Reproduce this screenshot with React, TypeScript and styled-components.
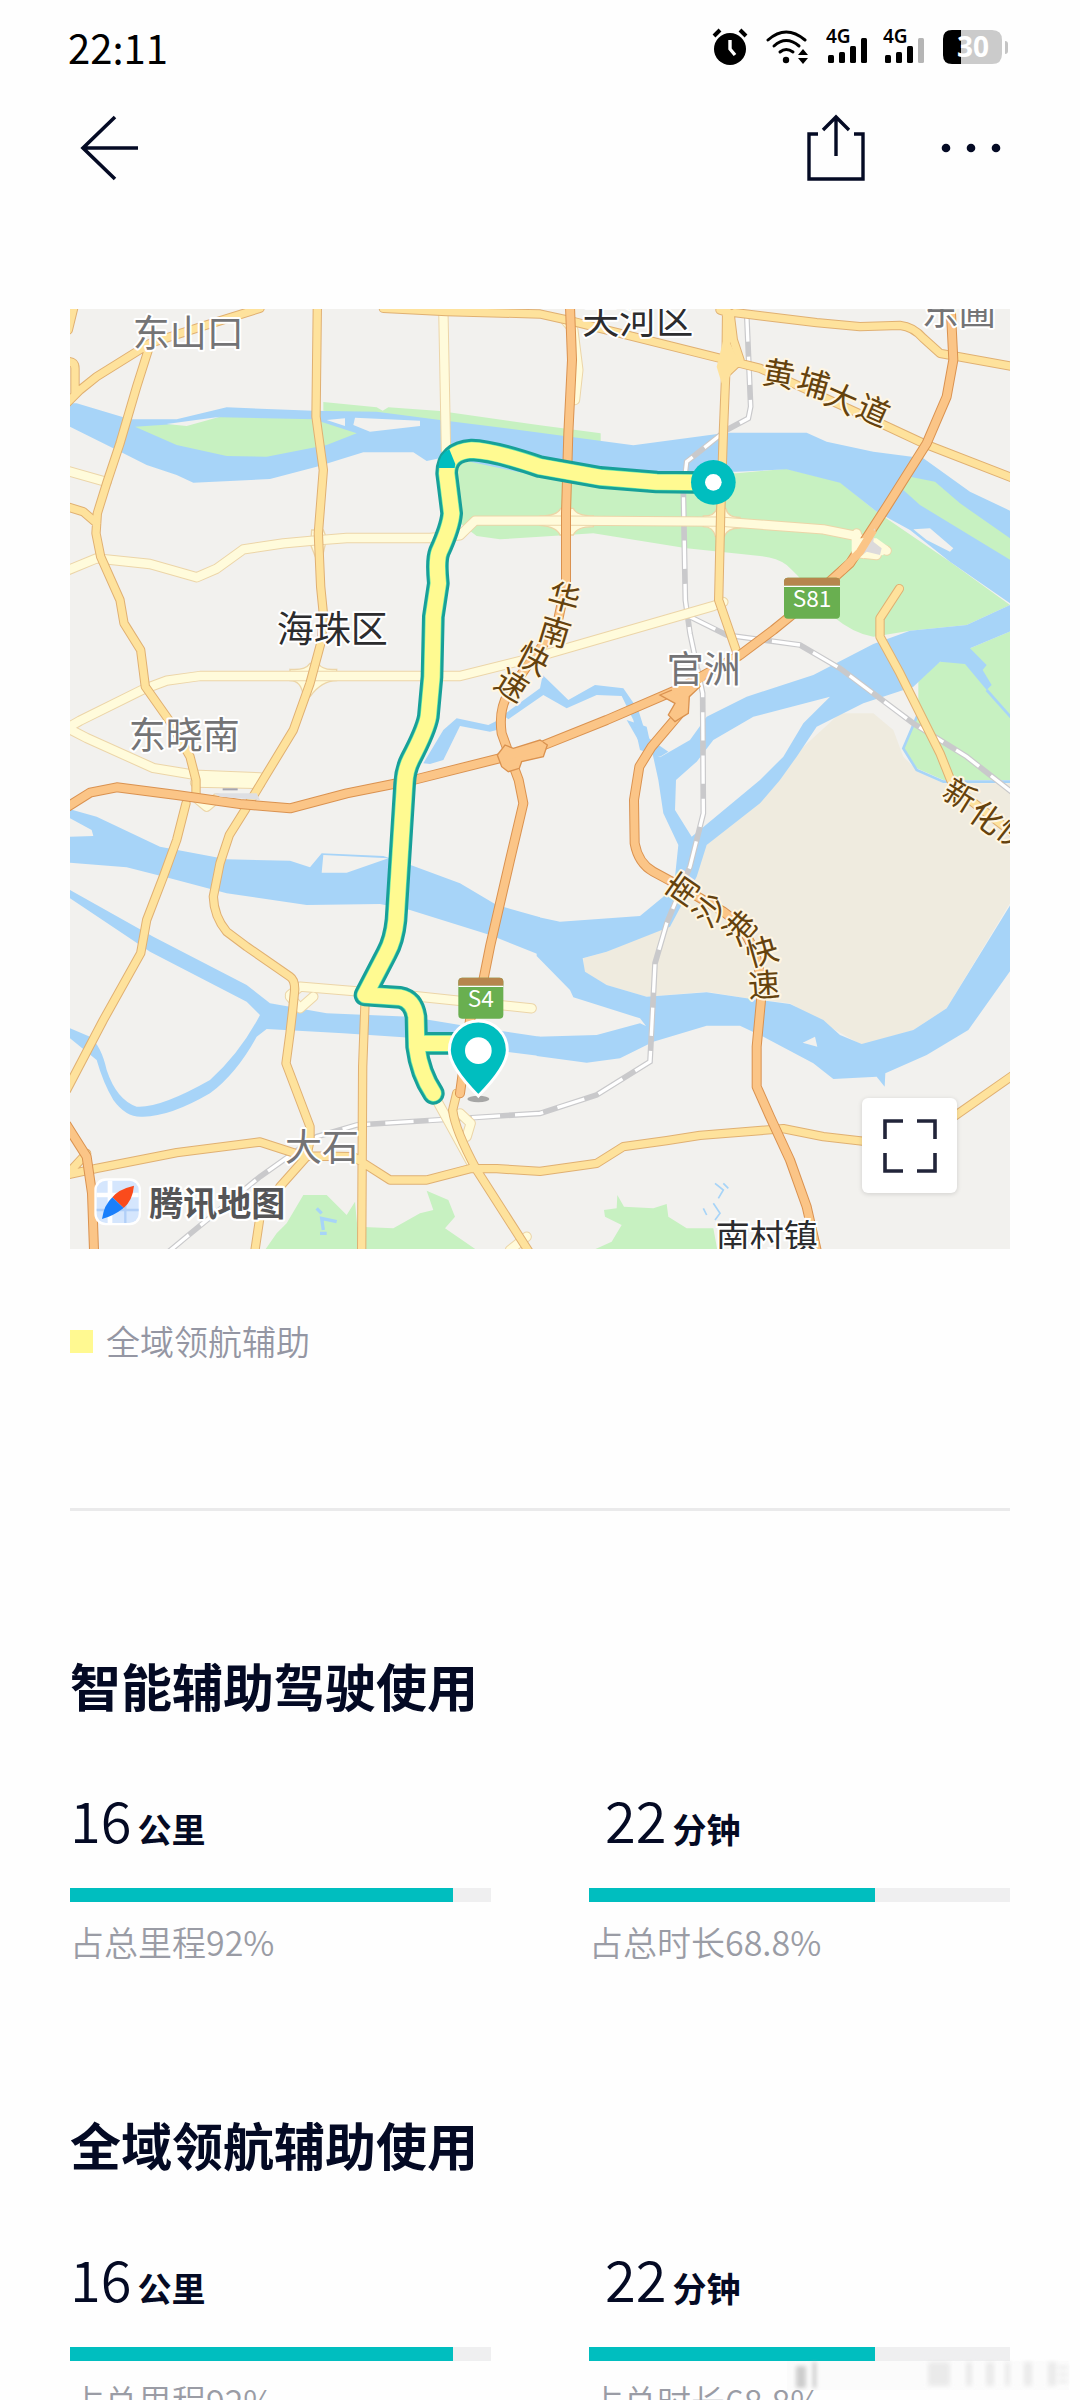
import React from "react";
import styled, { createGlobalStyle } from "styled-components";

const GlobalStyle = createGlobalStyle`
  * { box-sizing: border-box; }
  body {
    margin: 0;
    background: #fefefe;
    color: #040a24;
    font-family: "Noto Sans CJK SC", "Noto Sans", sans-serif;
  }
`;

const Screen = styled.div`
  position: relative;
  height: 100vh;
  overflow-y: auto;
  scrollbar-width: none;
`;

const StatusBar = styled.div`
  display: flex;
  align-items: center;
  justify-content: space-between;
  height: 94px;
  padding: 0 72px 0 68px;
  color: #000;
`;

const Clock = styled.time`
  font-size: 40px;
  line-height: 48px;
  font-weight: 400;
`;

const StatusIcons = styled.div`
  display: flex;
  align-items: center;
  gap: 18px;
`;

const Signals = styled.div`
  display: flex;
  gap: 15px;
`;

const NavBar = styled.header`
  display: flex;
  align-items: center;
  justify-content: space-between;
  height: 108px;
  padding: 0 73px;
`;

const NavActions = styled.div`
  display: flex;
  gap: 63px;
`;

const IconButton = styled.button`
  display: flex;
  align-items: center;
  justify-content: center;
  width: 72px;
  height: 72px;
  padding: 0;
  border: 0;
  background: none;
  color: #040a24;
`;

const Content = styled.main`
  padding: 107px 70px 0;
`;

const MapCard = styled.div`
  position: relative;
  aspect-ratio: 1;
  overflow: hidden;

  > svg {
    display: block;
    width: 100%;
    height: 100%;
  }
`;

const ExpandButton = styled(IconButton)`
  position: absolute;
  right: 53px;
  bottom: 56px;
  width: 95px;
  height: 95px;
  border-radius: 6px;
  background: #fff;
  box-shadow: 0 1px 5px rgba(0, 0, 0, 0.14);
  color: #22253a;
`;

const Legend = styled.div`
  display: flex;
  align-items: center;
  gap: 13px;
  margin-top: 68px;
  font-size: 34px;
  line-height: 48px;
  font-weight: 350;
  color: #9496a3;
`;

const Swatch = styled.span`
  width: 23px;
  height: 23px;
  background: #fff991;
`;

const Divider = styled.hr`
  height: 3px;
  margin: 143px 0 0;
  border: 0;
  background: #eaeaeb;
`;

const Section = styled.section`
  margin-bottom: 142px;

  ${Divider} + & {
    margin-top: 138px;
  }
`;

const SectionTitle = styled.h2`
  margin: 0 0 66px;
  font-size: 51px;
  line-height: 72px;
  font-weight: 700;
`;

const StatGrid = styled.div`
  display: grid;
  grid-template-columns: 1fr 1fr;
  gap: 98px;
`;

const Figure = styled.div<{ $inset?: boolean }>`
  display: flex;
  align-items: baseline;
  gap: 6px;
  padding-left: ${(p) => (p.$inset ? 16 : 0)}px;
`;

const Amount = styled.span`
  font-size: 56px;
  line-height: 64px;
  font-weight: 350;
`;

const Unit = styled.span`
  font-size: 34px;
  line-height: 48px;
  font-weight: 700;
`;

const Track = styled.div`
  height: 14px;
  margin-top: 35px;
  background: #efeff0;
`;

const Fill = styled.div`
  height: 100%;
  background: #00bebf;
`;

const Caption = styled.p`
  margin: 16px 0 0;
  font-size: 34px;
  line-height: 48px;
  font-weight: 350;
  color: #9a9ca5;
`;

const Watermark = styled.div`
  position: absolute;
  right: 10px;
  bottom: 8px;
  opacity: 0.7;

  > svg {
    display: block;
  }
`;

/* ---------- status icons ---------- */

const AlarmIcon = () => (
  <svg width="36" height="38" viewBox="0 0 36 38" aria-label="闹钟">
    <circle cx="18" cy="21" r="16" />
    <path d="M2 8l6-6M34 8l-6-6" stroke="#000" strokeWidth="4" />
    <path d="M18 12v9l5 6" stroke="#fff" strokeWidth="3.4" fill="none" />
  </svg>
);

const WifiIcon = () => (
  <svg width="42" height="34" viewBox="0 0 42 34" aria-label="WLAN">
    <g fill="none" stroke="#000" strokeWidth="3" strokeLinecap="round">
      <path d="M2 10Q20-6 39 10" />
      <path d="M8 16Q20 5 33 16" />
      <path d="M14 22Q20 17 27 22" />
    </g>
    <circle cx="20" cy="30" r="3.2" />
    <path d="M32 25l5-6 5 6zM32 28l5 6 5-6z" />
  </svg>
);

const SignalIcon = ({ bars }: { bars: number }) => (
  <svg width="42" height="50" viewBox="0 0 42 50" aria-label="4G">
    <text x="0" y="21" fontSize="19" fontWeight="600" fontFamily="Noto Sans, sans-serif">
      4G
    </text>
    {[8, 11, 17, 25].map((h, i) => (
      <rect key={h} x={2 + i * 11} y={41 - h} width="6" height={h} rx="1.5" fill={i < bars ? "#000" : "#b5b5b5"} />
    ))}
  </svg>
);

const BatteryIcon = () => (
  <svg width="65" height="50" viewBox="0 -8 65 50" aria-label="电量 30%">
    <path d="M10 0h39q10 0 10 10v14q0 10-10 10H17V0z" fill="#cbcbcb" />
    <path d="M18 0H9Q0 0 0 9v16q0 9 9 9h9z" />
    <path d="M62 11q3 0 3 3v7q0 3-3 3z" fill="#c4c4c4" />
    <text x="30" y="27" fontSize="28" fontWeight="700" fill="#fff" textAnchor="middle" fontFamily="Noto Sans, sans-serif">
      30
    </text>
  </svg>
);

/* ---------- map ---------- */

type RoadKind = "pale" | "yellow" | "orange";

const roadStyle: Record<RoadKind, { edge: string; fill: string; width: number }> = {
  pale: { edge: "#ecd5a8", fill: "#fffbdb", width: 25 },
  yellow: { edge: "#e0b072", fill: "#fee29c", width: 22 },
  orange: { edge: "#da9250", fill: "#fbc587", width: 24 },
};

const roads: Record<RoadKind, string[]> = {
  pale: [
    "M20 512L140 546",
    "M20 812L110 775L270 792L410 832L470 806L550 748L670 730L760 722L860 714H1110L1200 706L1245 662H1440L1520 662L1980 665L2290 688L2380 706L2480 752",
    "M1150 30L1158 450",
    "M20 1285L60 1262L250 1168L320 1142L420 1128H1200L1440 1068L1960 918L1990 906",
    "M30 1288L80 1314L280 1404L400 1424L600 1432",
    "M405 1448L600 1452M410 1495L440 1520L470 1495",
    "M690 2085L720 2060L900 2075L1060 2088L1415 2125",
    "M1130 2400L1240 2600M1200 2440L1232 2470L1220 2510",
    "M1515 60L1540 90L1555 210L1545 300",
    "M690 2090L720 2125L760 2090",
    "M1350 2850L1400 2810",
    "M2390 700L2400 760L2450 765",
  ],
  yellow: [
    "M42 20L25 90",
    "M25 185Q45 185 45 205V280",
    "M20 310L60 270L110 230L270 130L430 78L600 25",
    "M268 140L230 260L180 430L140 550L112 640L108 700L122 770L180 900L192 970L242 1050L256 1160L330 1265L390 1370L408 1440V1490",
    "M20 620L70 635L110 670",
    "M772 20L768 350L790 510L775 700L782 860L790 940L785 1020L750 1150L700 1290L615 1430L555 1530L508 1605L480 1690L460 1790Q462 1850 500 1895L560 1940L690 2030Q705 2040 704 2070L698 2130L690 2200L678 2290L750 2480V2520L740 2570L660 2660L600 2750L585 2850",
    "M378 1510L350 1620L310 1730L260 1860L242 1960L130 2160L20 2370",
    "M915 2110L908 2300L905 2850",
    "M20 2625L110 2605L350 2558L600 2526L730 2568L880 2570L990 2640H1100L1230 2606H1310L1440 2614L1610 2590L1690 2540L1820 2522L1920 2506L2170 2486L2290 2510L2420 2525",
    "M2660 2465L2860 2325",
    "M1190 2380L1178 2430Q1185 2490 1250 2610L1410 2860",
    "M970 25L1160 35L1440 42L1530 62L1640 90L1980 175L2100 205L2440 360L2590 430L2860 535",
    "M2000 20L1998 200L1990 400L1982 640L1976 900L2035 1070",
    "M1980 30L2010 40L2020 120L2040 180L1998 220",
    "M2025 38L2270 68L2400 80L2520 76Q2560 80 2590 115L2640 160L2860 200",
    "M2518 866L2460 955V1010L2520 1120L2640 1360L2672 1440L2730 1500L2860 1600",
    "M80 2560L25 2620",
  ],
  orange: [
    "M1530 20L1536 180L1525 400L1518 640V850L1490 980L1400 1100L1345 1180Q1315 1230 1325 1300L1350 1370L1376 1440L1390 1510L1350 1680L1290 1940L1270 2040L1230 2160L1200 2380",
    "M20 1522L90 1478L170 1462L350 1485L540 1512L690 1525L860 1480L1060 1440L1330 1372L1440 1340L1640 1260L1860 1165L2040 1065L2140 990L2220 925L2370 790L2480 620L2600 430L2660 290L2680 180L2672 20",
    "M1875 1170L1860 1240L1775 1340L1738 1400L1722 1500L1724 1630Q1735 1690 1780 1715L1830 1742L1990 1835Q2100 1910 2105 2080L2090 2240V2360L2130 2450L2190 2580L2240 2720L2272 2860",
    "M20 2475L80 2570L96 2680L102 2850",
  ],
};

const rails = [
  "M2060 40L2072 320L2065 355L2000 390L1880 485L1870 570L1876 900L1890 1000L1928 1180L1930 1540L1890 1700L1820 1870L1785 1990L1770 2285L1610 2385L1440 2440L1130 2460L890 2475L770 2510L600 2630L380 2810L320 2860",
  "M1890 950L2000 1005L2220 1035L2340 1105L2560 1270L2720 1370L2860 1480",
];

const route =
  "M1960 548L1790 546L1620 532L1440 500Q1300 452 1235 450Q1160 455 1160 520L1175 640Q1172 680 1138 755Q1128 780 1135 850L1120 950L1116 1130L1105 1250Q1098 1290 1052 1378Q1036 1410 1034 1450L1008 1860Q1002 1920 980 1960L915 2085L1020 2092Q1060 2100 1068 2150L1070 2240Q1080 2320 1120 2380";
const routeBranch = "M1080 2230H1190";

const placeFont = "'Noto Sans CJK SC', sans-serif";

const Place = ({ x, y, dark, children }: { x: number; y: number; dark?: boolean; children: string }) => (
  <text
    x={x}
    y={y}
    fontSize="111"
    fill={dark ? "#2c2c2e" : "#747476"}
    stroke="#fff"
    strokeWidth="12"
    strokeLinejoin="round"
    paintOrder="stroke"
    fontFamily={placeFont}
  >
    {children}
  </text>
);

/** Road names follow the bend of the road: [glyph, centre x, centre y, angle]. */
const roadNames: [string, number, number, number][] = [
  ["黄", 2156, 222, 10],
  ["埔", 2260, 250, 16],
  ["大", 2344, 295, 24],
  ["道", 2440, 332, 24],
  ["华", 1512, 893, 15],
  ["南", 1484, 995, 17],
  ["快", 1420, 1076, 28],
  ["速", 1355, 1155, 32],
  ["新", 2700, 1485, 32],
  ["化", 2780, 1552, 35],
  ["快", 2862, 1605, 38],
  ["南", 1868, 1768, -55],
  ["沙", 1950, 1830, -52],
  ["港", 2040, 1885, -48],
  ["快", 2106, 1955, -16],
  ["速", 2112, 2055, -4],
];

const RoadShield = ({ x, y, width, name }: { x: number; y: number; width: number; name: string }) => (
  <g>
    <rect x={x} y={y} width={width} height="123" rx="12" fill="#69af50" />
    <path d={`M${x} ${y + 24}v-12q0-12 12-12h${width - 24}q12 0 12 12v12z`} fill="#b6864d" />
    <path d={`M${x} ${y + 26}h${width}`} stroke="#fff" strokeWidth="4" />
    <text x={x + width / 2} y={y + 88} fontSize="68" fill="#fff" textAnchor="middle" fontFamily={placeFont}>
      {name}
    </text>
  </g>
);

const RouteMap = () => (
  <svg viewBox="30 27 2820 2820" role="img" aria-label="行程路线地图">
    <rect x="30" y="27" width="2820" height="2820" fill="#f2f1ee" />

    {/* university island */}
    <path
      d="M1570 1975L1640 1955L1820 1880L1940 1635L2160 1440L2220 1350L2340 1240L2440 1240L2500 1290L2530 1370L2570 1410L2650 1450H2850V1810L2660 2125L2560 2190L2405 2235L2290 2170L2190 2110L2060 2095L1940 2075L1760 2090L1640 2055L1570 2015z"
      fill="#efebdf"
    />

    {/* parks */}
    <g fill="#c7f1c1">
      <path d="M790 306L950 322L968 332L985 322L1140 333L1440 376L1622 400V428L1440 402L1140 362L790 332z" />
      <path d="M1190 470L1440 520H2030L2180 506L2340 546L2450 635L2670 785L2850 915L2720 975L2550 992L2440 1010Q2380 1000 2320 950Q2240 850 2180 795Q2150 772 2100 768L1880 745L1600 700L1440 710L1320 718L1250 708L1200 670z" />
      <path d="M2730 1045L2860 990V1440H2650L2570 1405L2530 1345L2575 1240V1130L2640 1085z" />
      <path d="M615 2850L650 2800L680 2770L730 2685H800L860 2745L885 2705L892 2780L1000 2785L1080 2740L1120 2730L1100 2672L1165 2700L1185 2750L1155 2785L1250 2850z" />
      <path d="M1600 2850L1655 2825L1685 2775L1635 2750L1632 2730L1670 2725L1672 2685L1692 2720L1780 2725L1820 2712L1825 2750L1880 2785L1960 2785L1972 2850z" />
    </g>

    {/* rivers */}
    <g fill="#a7d4f8">
      <path d="M30 310H50L210 358H350L500 322L760 332L950 335L1140 360L1440 398L1720 436L2000 398H2240L2300 425L2440 455L2590 475L2730 575L2850 632V910L2670 785L2550 690L2450 635L2340 548L2180 508L2030 515L1440 530L1160 470L1100 483L1060 457H910L770 500L630 537L400 548L350 525L260 495L190 460L30 380z" />
      <path d="M2860 910L2720 975L2550 992L2440 1032L2260 1125L2060 1190L1940 1250L1890 1320L1800 1372L1740 1330L1700 1260L1760 1280L1795 1440L1810 1540L1855 1635L1845 1730L1810 1790L1740 1848L1500 1865L1430 1850V1968L1530 2070L1540 2092L1740 2155L1758 2178L1740 2170L1610 2205L1430 2210V2268L1580 2288L1680 2275L1780 2225L1940 2177H2040L2110 2210L2260 2290L2320 2337L2450 2330L2474 2360L2476 2320L2600 2265L2725 2190L2860 2000V1800L2660 2125L2560 2190L2405 2232L2340 2205L2290 2160L2190 2112L2060 2095L1940 2077L1760 2090L1640 2055L1575 2015L1568 1975L1640 1955L1830 1880L1910 1730L1940 1635L2100 1510L2160 1440L2210 1370L2270 1280L2410 1210L2560 1160L2640 1085L2715 1092L2780 1170L2795 1155L2768 1110L2780 1095L2730 1045L2860 990z" />
      <path d="M30 1528L110 1550L300 1640L500 1678L690 1682L750 1702L785 1660L970 1668L1060 1698L1200 1750L1310 1815L1440 1852V1965L1290 1905L1050 1830L960 1812L740 1815L500 1780L330 1735L200 1702L30 1688z" />
      <path d="M30 1770L280 1910L560 2055L630 2110L800 2140L1050 2150L1200 2175L1440 2210V2268L1300 2250L1030 2212L850 2200L620 2187L590 2210Q530 2320 450 2380Q330 2450 250 2450Q200 2455 160 2400Q130 2350 110 2280L30 2215V2185L90 2210Q125 2240 140 2310Q170 2400 230 2420Q300 2425 450 2340Q540 2260 600 2145L560 2105L270 1955L30 1795z" />
      <path d="M1090 1390L1150 1290L1190 1255L1285 1275L1320 1258L1310 1290L1290 1295L1200 1278L1150 1380L1110 1392z" />
      <path d="M1330 1245L1440 1165L1448 1125L1525 1200L1605 1155L1690 1165L1735 1230L1760 1310L1825 1355L1800 1370L1740 1350L1720 1260L1685 1188L1610 1185L1520 1225L1450 1185L1345 1258z" />
    </g>
    <path d="M2575 1240L2530 1345L2570 1410L2650 1445H2860M2780 1170L2860 1260" stroke="#a7d4f8" strokeWidth="8" fill="none" />
    <g fill="#c7f1c1">
      <path d="M225 380L380 370L480 352L760 358L890 400L800 435L620 470L500 468L350 435z" />
      <path d="M2550 530L2625 545L2700 610L2860 722V785L2580 615L2530 570z" />
    </g>
    {/* islets and sand bars */}
    <g fill="#f2f1ee">
      <path d="M885 353L1080 362V378L930 395L880 375zM800 360L855 355V378zM320 372L480 350L380 378z" />
      <path d="M30 1555L95 1590L100 1608L30 1610zM790 1665L985 1675L860 1718H785z" />
      <path d="M1848 1440L1845 1530L1895 1610L2100 1440L2170 1370L2230 1270L2310 1190L2080 1250L1960 1320L1910 1385z" />
      <path d="M2228 2228L2265 2210L2272 2240zM2560 688L2610 685L2680 745L2670 755L2600 720z" />
    </g>
    <path d="M770 2725L785 2740M780 2800H800M790 2790L785 2755L830 2765" stroke="#a7d4f8" strokeWidth="10" fill="none" />
    <path d="M1965 2650L1990 2670L1975 2695M1990 2650L2005 2665M1960 2710L1980 2740L1965 2760M1930 2725L1940 2745" stroke="#a7d4f8" strokeWidth="5" fill="none" />

    {/* railways */}
    {rails.map((d) => (
      <g key={d} fill="none">
        <path d={d} stroke="#c9c9cb" strokeWidth="17" />
        <path d={d} stroke="#fff" strokeWidth="10" strokeDasharray="85 45" />
      </g>
    ))}

    {/* interchange aprons */}
    <g fill="#fffbdb" stroke="#ecd5a8" strokeWidth="4">
      <path d="M755 690H790L800 715L785 780H770L752 735z" />
      <path d="M690 1108Q735 1112 750 1090H775Q785 1112 830 1108V1142Q785 1142 750 1190H730Q725 1142 690 1142z" />
      <path d="M1440 648Q1490 648 1502 625H1540Q1550 648 1600 648V680Q1550 680 1540 705H1500Q1490 680 1440 676z" />
      <path d="M1930 648Q1965 648 1970 625H1998Q2002 652 2040 652V684Q2002 684 1992 710H1966Q1960 680 1930 680z" />
    </g>

    {/* roads */}
    {(Object.keys(roads) as RoadKind[]).map((kind) => {
      const s = roadStyle[kind];
      return (
        <g key={kind} fill="none" strokeLinejoin="round" strokeLinecap="round">
          <path d={roads[kind].join("")} stroke={s.edge} strokeWidth={s.width + 6} />
          <path d={roads[kind].join("")} stroke={s.fill} strokeWidth={s.width} />
        </g>
      );
    })}
    <path d="M2375 715L2375 760L2410 775L2470 765L2485 740L2450 715z" fill="#fffbdb" />
    <path d="M2400 770L2430 700L2445 685L2440 725L2465 745L2460 765L2420 755z" fill="#dcdadb" />
    <path d="M2345 812L2400 755L2440 690" stroke="#fbc587" strokeWidth="24" fill="none" />
    <path d="M460 1480H590L600 1500L480 1490z" fill="#dedfe3" />
    <path d="M488 1468h45" stroke="#a5a5b0" strokeWidth="6" />
    <g fill="#fbc587" stroke="#da9250" strokeWidth="4">
      <path d="M1312 1365L1335 1335L1360 1345L1440 1320L1462 1335L1450 1370L1385 1385L1378 1405L1345 1415L1325 1400z" />
      <path d="M1800 1185L1860 1160L1910 1130L1920 1160L1888 1190L1885 1240L1845 1265L1825 1245L1845 1210z" />
    </g>
    <path d="M1330 1370L1450 1336M1840 1178L1930 1130" stroke="#fbc587" strokeWidth="24" />
    <path d="M1970 200L1990 120H2005L2040 190L2015 215L2000 250H1985z" fill="#fee29c" />

    {/* driven route */}
    <g fill="none" strokeLinejoin="round" strokeLinecap="round">
      <path d={route + routeBranch} stroke="#17a099" strokeWidth="68" />
      <path d={route + routeBranch} stroke="#62e6a8" strokeWidth="50" />
      <path d={route + routeBranch} stroke="#fffa91" strokeWidth="46" />
    </g>
    <path d="M1168 448L1186 492L1184 504H1136Q1136 462 1168 448z" fill="#00bebf" />
    <circle cx="1960" cy="547" r="67" fill="#00bebf" />
    <circle cx="1960" cy="547" r="25" fill="#fff" />

    {/* place names */}
    <Place x={218} y={142}>东山口</Place>
    <Place x={1567} y={101} dark>天河区</Place>
    <Place x={2585} y={75}>东圃</Place>
    <Place x={650} y={1030} dark>海珠区</Place>
    <Place x={206} y={1348}>东晓南</Place>
    <Place x={1820} y={1148}>官洲</Place>
    <Place x={675} y={2584}>大石</Place>
    <text x="1967" y="2846" fontSize="102" fill="#2c2c2e" stroke="#fff" strokeWidth="12" paintOrder="stroke" fontFamily={placeFont}>
      南村镇
    </text>
    {roadNames.map(([glyph, x, y, angle]) => (
      <text
        key={`${x}-${y}`}
        transform={`translate(${x} ${y}) rotate(${angle})`}
        y="35"
        fontSize="96"
        textAnchor="middle"
        fill="#65420d"
        stroke="#fff6e2"
        strokeWidth="12"
        strokeLinejoin="round"
        paintOrder="stroke"
        fontFamily={placeFont}
      >
        {glyph}
      </text>
    ))}

    <RoadShield x={2172} y={833} width={168} name="S81" />
    <RoadShield x={1195} y={2033} width={135} name="S4" />

    {/* destination pin */}
    <ellipse cx="1255" cy="2397" rx="33" ry="10" fill="#8c8c8c" opacity=".75" />
    <path
      d="M1255 2388Q1168 2300 1168 2250A87 87 0 0 1 1342 2250Q1342 2300 1255 2388z"
      fill="#00bebf"
      stroke="#fff"
      strokeWidth="9"
    />
    <circle cx="1255" cy="2252" r="40" fill="#fff" />

    {/* map provider */}
    <rect x="103" y="2635" width="140" height="141" rx="34" fill="#fff" />
    <rect x="110" y="2642" width="126" height="127" rx="28" fill="#d5e6fd" />
    <path d="M150 2642V2769M110 2685H236" stroke="#fff" strokeWidth="14" />
    <path d="M196 2680V2769M110 2730H236" stroke="#b1cff8" strokeWidth="7" />
    <path d="M222 2657Q175 2668 157 2692L191 2724Q218 2700 222 2657z" fill="#fa4b1c" />
    <path d="M126 2757Q132 2715 157 2692L191 2724Q160 2748 126 2757z" fill="#1a7ffb" />
    <text x="268" y="2748" fontSize="102" fontWeight="700" fill="#555557" stroke="#fff" strokeWidth="14" strokeLinejoin="round" paintOrder="stroke" fontFamily={placeFont}>
      腾讯地图
    </text>
  </svg>
);

/* ---------- usage statistics ---------- */

interface Stat {
  amount: number;
  unit: string;
  caption: string;
  fill: number;
}

const stats: Stat[] = [
  { amount: 16, unit: "公里", caption: "占总里程92%", fill: 91 },
  { amount: 22, unit: "分钟", caption: "占总时长68.8%", fill: 68 },
];

const UsageSection = ({ title }: { title: string }) => (
  <Section>
    <SectionTitle>{title}</SectionTitle>
    <StatGrid>
      {stats.map((s, i) => (
        <div key={s.unit}>
          <Figure $inset={i > 0}>
            <Amount>{s.amount}</Amount>
            <Unit>{s.unit}</Unit>
          </Figure>
          <Track role="progressbar" aria-label={s.caption} aria-valuenow={s.fill}>
            <Fill style={{ width: `${s.fill}%` }} />
          </Track>
          <Caption>{s.caption}</Caption>
        </div>
      ))}
    </StatGrid>
  </Section>
);

export default function App() {
  return (
    <Screen>
      <GlobalStyle />
      <StatusBar>
        <Clock>22:11</Clock>
        <StatusIcons>
          <AlarmIcon />
          <WifiIcon />
          <Signals>
            <SignalIcon bars={4} />
            <SignalIcon bars={3} />
          </Signals>
          <BatteryIcon />
        </StatusIcons>
      </StatusBar>
      <NavBar>
        <IconButton type="button" aria-label="返回">
          <svg width="60" height="66" viewBox="0 0 60 66" fill="none" stroke="currentColor" strokeWidth="3.6">
            <path d="M36 2L4 33l32 31M4 33h55" />
          </svg>
        </IconButton>
        <NavActions>
          <IconButton type="button" aria-label="分享">
            <svg width="60" height="68" viewBox="0 0 60 68" fill="none" stroke="currentColor" strokeWidth="3.4">
              <path d="M12 20H3v45h54V20h-9" />
              <path d="M30 42V3M17 16L30 3l13 13" />
            </svg>
          </IconButton>
          <IconButton type="button" aria-label="更多">
            <svg width="60" height="12" viewBox="0 0 60 12" fill="currentColor">
              <circle cx="5" cy="6" r="4.3" />
              <circle cx="30" cy="6" r="4.3" />
              <circle cx="55" cy="6" r="4.3" />
            </svg>
          </IconButton>
        </NavActions>
      </NavBar>
      <Content>
        <MapCard>
          <RouteMap />
          <ExpandButton type="button" aria-label="全屏查看地图">
            <svg width="54" height="54" viewBox="0 0 54 54" fill="none" stroke="currentColor" strokeWidth="3.6">
              <path d="M20 2H2v18M34 2h18v18M20 52H2V34M34 52h18V34" />
            </svg>
          </ExpandButton>
        </MapCard>
        <Legend>
          <Swatch />
          全域领航辅助
        </Legend>
        <Divider />
        <UsageSection title="智能辅助驾驶使用" />
        <UsageSection title="全域领航辅助使用" />
      </Content>
      <Watermark aria-hidden="true">
        <svg width="284" height="34" viewBox="0 0 284 34">
          <defs>
            <filter id="soft">
              <feGaussianBlur stdDeviation="2" />
            </filter>
          </defs>
          <rect x="1" y="3" width="282" height="29" fill="#f8f8f8" opacity=".5" />
          <g filter="url(#soft)" fill="#e2e2e2">
            <path d="M10 8h10v22H10z" fill="#b8b8b8" />
            <path d="M27 4h3v26h-3z" fill="#a8a8a8" />
            <path d="M142 4h22v24h-22zM180 4h6v24h-6zM200 4h8v24h-8zM219 4h5v24h-5zM238 4h8v24h-8zM262 4h8v24h-8zM272 8h10v3h-10zM272 15h10v3h-10zM272 22h10v3h-10z" />
          </g>
        </svg>
      </Watermark>
    </Screen>
  );
}
